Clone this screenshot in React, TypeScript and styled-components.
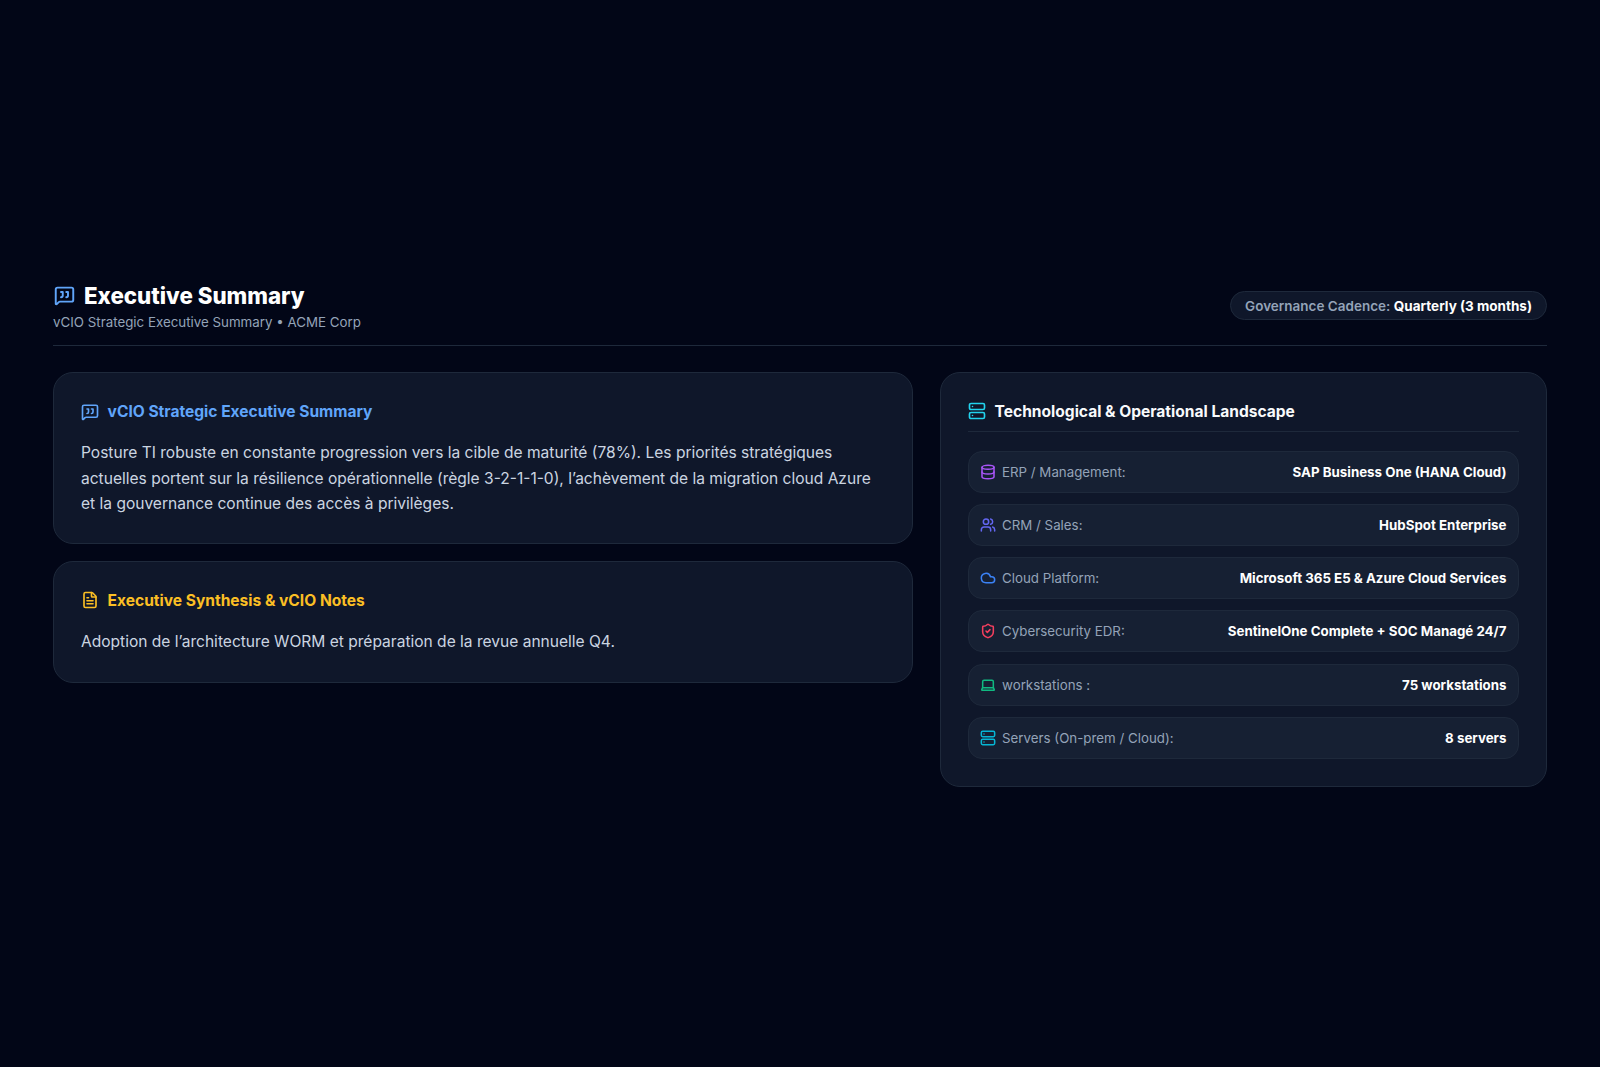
import React from "react";
import styled, { createGlobalStyle } from "styled-components";
import { MessageSquareQuote, FileText, Server, Database, Users, Cloud, ShieldCheck, Laptop } from "lucide-react";

const Global = createGlobalStyle`
  html, body { margin: 0; padding: 0; background: #020617; }
  body { font-family: Inter, "Noto Sans", sans-serif; }
  * { box-sizing: border-box; }
`;

const Page = styled.main`
  min-height: 1067px;
  padding: 282px 53px 0;
  background: #020617;
`;

const Header = styled.header`
  display: flex;
  justify-content: space-between;
  align-items: flex-start;
  height: 64px;
  border-bottom: 1px solid #1e293b;
`;

const TitleRow = styled.div`
  display: flex;
  align-items: center;
  gap: 9px;
  height: 27px;
  color: #f8fafc;
  svg { color: #60a5fa; margin-left: 1px; }
`;

const Title = styled.h1`
  margin: 0;
  font-size: 22.3px;
  line-height: 27px;
  font-weight: 800;
  color: #fff;
`;

const Subtitle = styled.p`
  margin: 5px 0 0;
  font-size: 13.34px;
  line-height: 16px;
  color: #94a3b8;
`;

const Pill = styled.div`
  margin-top: 9px;
  height: 29px;
  display: flex;
  align-items: center;
  padding: 0 14px;
  border-radius: 15px;
  background: #0f172a;
  border: 1px solid #1e293b;
  font-size: 13.5px;
  font-weight: 600;
  color: #94a3b8;
  white-space: pre;
  b { font-weight: 700; color: #fff; }
`;

const Columns = styled.div`
  display: grid;
  grid-template-columns: 860px 607px;
  gap: 27px;
  margin-top: 26px;
  align-items: start;
`;

const Stack = styled.div`
  display: flex;
  flex-direction: column;
  gap: 17.4px;
`;

const Card = styled.section`
  background: #0f172a;
  border: 1px solid #1e293b;
  border-radius: 20px;
  padding: 27px;
`;

const TextCard = styled(Card)`
  padding-bottom: 26px;
  & + & { padding-bottom: 27.6px; }
`;

const CardHead = styled.div<{ $color: string }>`
  display: flex;
  align-items: center;
  gap: 8.6px;
  height: 23px;
  color: ${(p) => p.$color};
  font-size: 15.55px;
  font-weight: 700;
`;

const Body = styled.p`
  margin: 17px 0 0;
  padding-right: 12px;
  font-size: 15.55px;
  line-height: 25.5px;
  color: #cbd5e1;
`;

const LandHead = styled(CardHead)`
  height: 32px;
  padding-bottom: 9px;
  border-bottom: 1px solid #1e293b;
  span { color: #f8fafc; }
`;

const Rows = styled.div`
  display: flex;
  flex-direction: column;
  gap: 11.3px;
  margin-top: 18.6px;
`;

const Row = styled.div`
  height: 42px;
  display: flex;
  align-items: center;
  padding: 0 11.5px 0 11px;
  background: #1e293b80;
  border: 1px solid #1e293b;
  border-radius: 14px;
  font-size: 13.32px;
`;

const RowIcon = styled.span<{ $color: string }>`
  display: flex;
  color: ${(p) => p.$color};
  margin-right: 6px;
`;

const RowLabel = styled.span`
  color: #94a3b8;
  flex: 1;
`;

const RowValue = styled.span`
  color: #fff;
  font-weight: 700;
`;

const rows = [
  { Icon: Database, color: "#a855f7", label: "ERP / Management:", value: "SAP Business One (HANA Cloud)" },
  { Icon: Users, color: "#6366f1", label: "CRM / Sales:", value: "HubSpot Enterprise" },
  { Icon: Cloud, color: "#3b82f6", label: "Cloud Platform:", value: "Microsoft 365 E5 & Azure Cloud Services" },
  { Icon: ShieldCheck, color: "#f43f5e", label: "Cybersecurity EDR:", value: "SentinelOne Complete + SOC Managé 24/7" },
  { Icon: Laptop, color: "#10b981", label: "workstations :", value: "75 workstations" },
  { Icon: Server, color: "#06b6d4", label: "Servers (On-prem / Cloud):", value: "8 servers" },
];

export default function App() {
  return (
    <Page>
      <Global />
      <Header>
        <div>
          <TitleRow>
            <MessageSquareQuote size={21} strokeWidth={2.2} />
            <Title>Executive Summary</Title>
          </TitleRow>
          <Subtitle>vCIO Strategic Executive Summary • ACME Corp</Subtitle>
        </div>
        <Pill>
          Governance Cadence: <b>Quarterly (3 months)</b>
        </Pill>
      </Header>
      <Columns>
        <Stack>
          <TextCard>
            <CardHead $color="#60a5fa">
              <MessageSquareQuote size={18} strokeWidth={2.2} />
              vCIO Strategic Executive Summary
            </CardHead>
            <Body>
              Posture TI robuste en constante progression vers la cible de maturité (78%). Les priorités stratégiques
              actuelles portent sur la résilience opérationnelle (règle 3-2-1-1-0), l’achèvement de la migration cloud
              Azure et la gouvernance continue des accès à privilèges.
            </Body>
          </TextCard>
          <TextCard>
            <CardHead $color="#fbbf24">
              <FileText size={18} strokeWidth={2.2} />
              Executive Synthesis &amp; vCIO Notes
            </CardHead>
            <Body>Adoption de l’architecture WORM et préparation de la revue annuelle Q4.</Body>
          </TextCard>
        </Stack>
        <Card>
          <LandHead $color="#22d3ee">
            <Server size={18} strokeWidth={2.2} />
            <span>Technological &amp; Operational Landscape</span>
          </LandHead>
          <Rows>
            {rows.map(({ Icon, color, label, value }) => (
              <Row key={label}>
                <RowIcon $color={color}>
                  <Icon size={16} strokeWidth={2.3} />
                </RowIcon>
                <RowLabel>{label}</RowLabel>
                <RowValue>{value}</RowValue>
              </Row>
            ))}
          </Rows>
        </Card>
      </Columns>
    </Page>
  );
}
